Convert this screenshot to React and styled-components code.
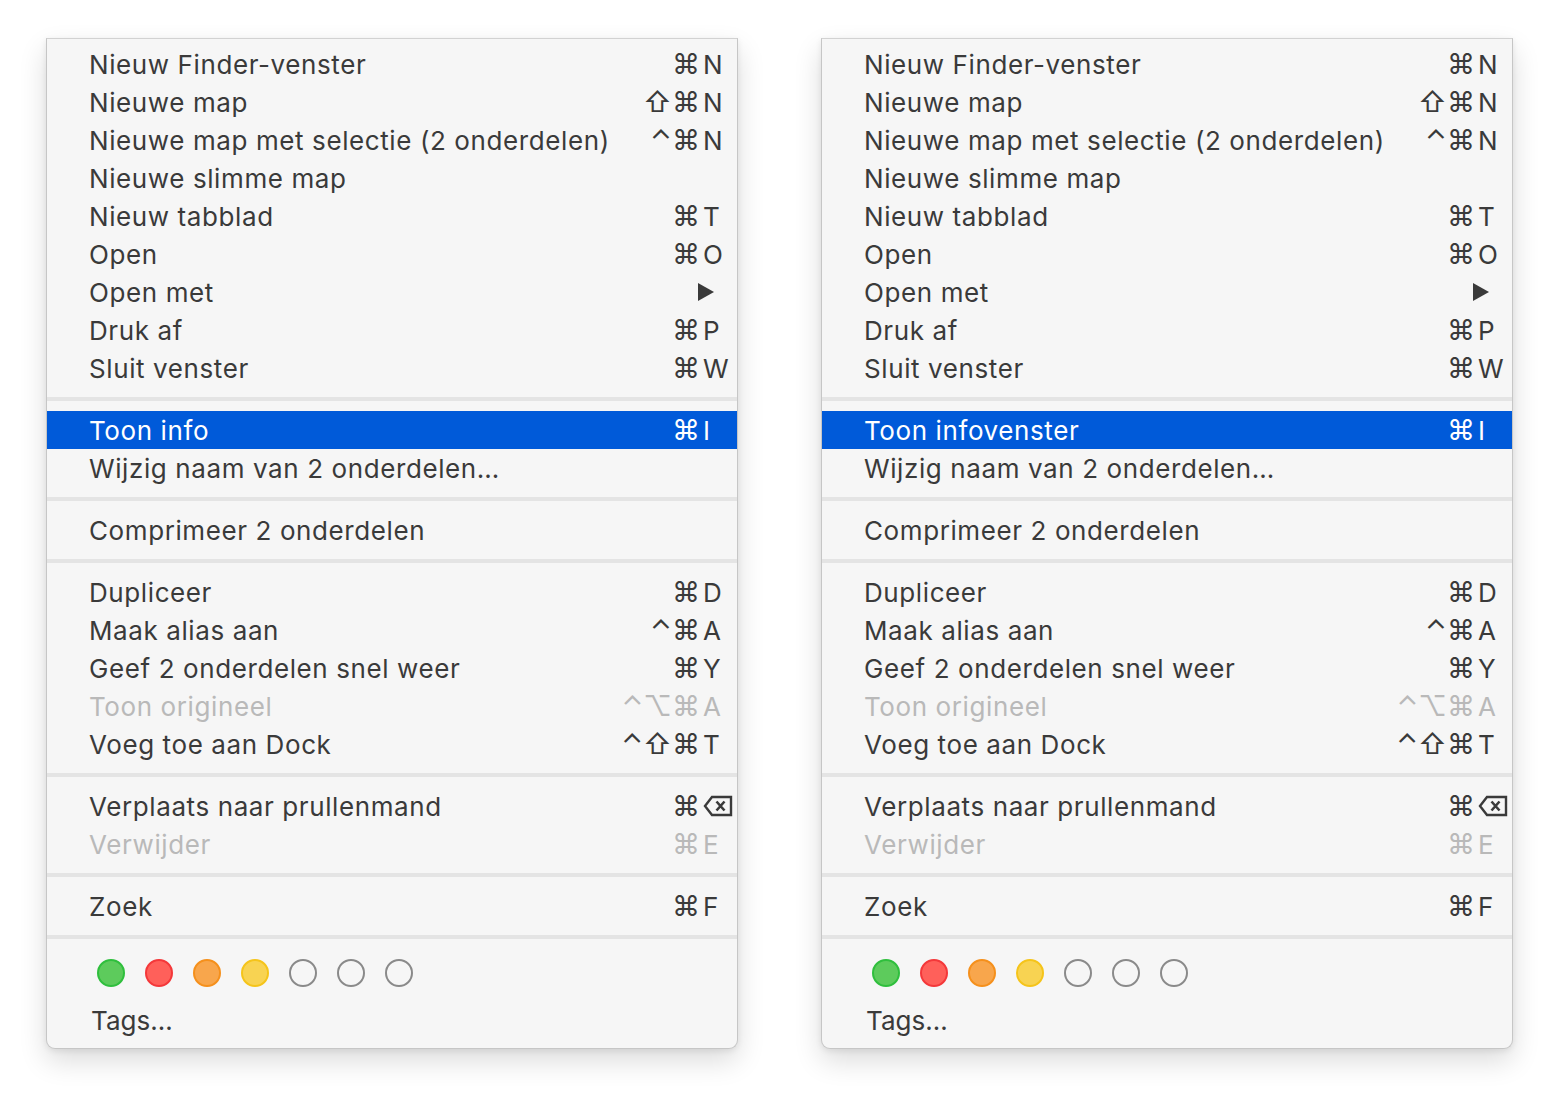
import React from "react";
import styled, { createGlobalStyle } from "styled-components";

const GlobalStyle = createGlobalStyle`
  html, body { margin: 0; padding: 0; background: #ffffff; }
  body { font-family: Inter, "Noto Sans", "DejaVu Sans", sans-serif; }
`;

const Page = styled.div`
  display: flex;
  gap: 83px;
  padding: 38px 0 0 46px;
  height: 1102px;
  box-sizing: border-box;
`;

const Menu = styled.div`
  width: 692px;
  box-sizing: border-box;
  background: #f6f6f6;
  border: 1px solid #c6c6c6;
  border-top-color: #d2d2d2;
  border-radius: 0 0 9px 9px;
  padding: 6px 0 9px;
  align-self: flex-start;
  box-shadow: 0 12px 28px rgba(0, 0, 0, 0.14), 0 2px 6px rgba(0, 0, 0, 0.08);
  font-size: 26px;
  letter-spacing: 0.6px;
`;

const Item = styled.div`
  display: grid;
  grid-template-columns: 1fr auto 37px;
  align-items: center;
  height: 38px;
  padding-left: 42px;
  color: ${(p) => (p.$active ? "#ffffff" : p.$disabled ? "#b9b9b9" : "#3a3a3a")};
  background: ${(p) => (p.$active ? "#005ad9" : "transparent")};
  white-space: nowrap;
`;

const Label = styled.span``;

const Mods = styled.span`
  text-align: right;
  letter-spacing: 0;
  font-size: 28px;
`;

const Key = styled.span`
  padding-left: 3px;
  display: flex;
  align-items: center;
  letter-spacing: 0;
`;

const Separator = styled.div`
  height: 4px;
  margin: 10px 0;
  background: #e4e4e4;
`;

const Dots = styled.div`
  display: flex;
  gap: 20px;
  padding: 10px 0 0 50px;
`;

const Dot = styled.span`
  width: 28px;
  height: 28px;
  box-sizing: border-box;
  border-radius: 50%;
  background: ${(p) => p.$fill || "transparent"};
  border: 2px solid ${(p) => p.$stroke};
`;

const TagsLabel = styled.div`
  height: 38px;
  margin-top: 14px;
  padding-left: 44px;
  display: flex;
  align-items: center;
  color: #3a3a3a;
  letter-spacing: 0;
`;

const Arrow = () => (
  <svg width="18" height="20" viewBox="0 0 18 20" style={{ marginLeft: -6 }}>
    <path d="M1 1 L17 10 L1 19 Z" fill="currentColor" />
  </svg>
);

const DeleteKey = () => (
  <svg width="30" height="22" viewBox="0 0 30 22">
    <path
      d="M9 2 H28 V20 H9 L2 11 Z"
      fill="none"
      stroke="currentColor"
      strokeWidth="2.4"
      strokeLinejoin="miter"
    />
    <path d="M13.5 6.5 L21.5 15.5 M21.5 6.5 L13.5 15.5" stroke="currentColor" strokeWidth="2.6" />
  </svg>
);

const tags = [
  { fill: "#5dcb5c", stroke: "#2fbf3d" },
  { fill: "#ff605a", stroke: "#f4383a" },
  { fill: "#f8a64c", stroke: "#f5901c" },
  { fill: "#f8d352", stroke: "#f5c41a" },
  { stroke: "#8a8a8a" },
  { stroke: "#8a8a8a" },
  { stroke: "#8a8a8a" },
];

const buildGroups = (infoLabel) => [
  [
    { label: "Nieuw Finder-venster", mods: "⌘", key: "N" },
    { label: "Nieuwe map", mods: "⇧⌘", key: "N" },
    { label: "Nieuwe map met selectie (2 onderdelen)", mods: "⌃⌘", key: "N" },
    { label: "Nieuwe slimme map" },
    { label: "Nieuw tabblad", mods: "⌘", key: "T" },
    { label: "Open", mods: "⌘", key: "O" },
    { label: "Open met", submenu: true },
    { label: "Druk af", mods: "⌘", key: "P" },
    { label: "Sluit venster", mods: "⌘", key: "W" },
  ],
  [
    { label: infoLabel, mods: "⌘", key: "I", active: true },
    { label: "Wijzig naam van 2 onderdelen…" },
  ],
  [{ label: "Comprimeer 2 onderdelen" }],
  [
    { label: "Dupliceer", mods: "⌘", key: "D" },
    { label: "Maak alias aan", mods: "⌃⌘", key: "A" },
    { label: "Geef 2 onderdelen snel weer", mods: "⌘", key: "Y" },
    { label: "Toon origineel", mods: "⌃⌥⌘", key: "A", disabled: true },
    { label: "Voeg toe aan Dock", mods: "⌃⇧⌘", key: "T" },
  ],
  [
    { label: "Verplaats naar prullenmand", mods: "⌘", key: "del" },
    { label: "Verwijder", mods: "⌘", key: "E", disabled: true },
  ],
  [{ label: "Zoek", mods: "⌘", key: "F" }],
];

const FinderMenu = ({ infoLabel }) => {
  const groups = buildGroups(infoLabel);
  return (
    <Menu>
      {groups.map((group, gi) => (
        <React.Fragment key={gi}>
          {group.map((it) => (
            <Item key={it.label} $active={it.active} $disabled={it.disabled}>
              <Label>{it.label}</Label>
              <Mods>{it.mods || ""}</Mods>
              <Key>
                {it.submenu ? <Arrow /> : it.key === "del" ? <DeleteKey /> : it.key || ""}
              </Key>
            </Item>
          ))}
          <Separator />
        </React.Fragment>
      ))}
      <Dots>
        {tags.map((t, i) => (
          <Dot key={i} $fill={t.fill} $stroke={t.stroke} />
        ))}
      </Dots>
      <TagsLabel>Tags…</TagsLabel>
    </Menu>
  );
};

export default function App() {
  return (
    <>
      <GlobalStyle />
      <Page>
        <FinderMenu infoLabel="Toon info" />
        <FinderMenu infoLabel="Toon infovenster" />
      </Page>
    </>
  );
}
